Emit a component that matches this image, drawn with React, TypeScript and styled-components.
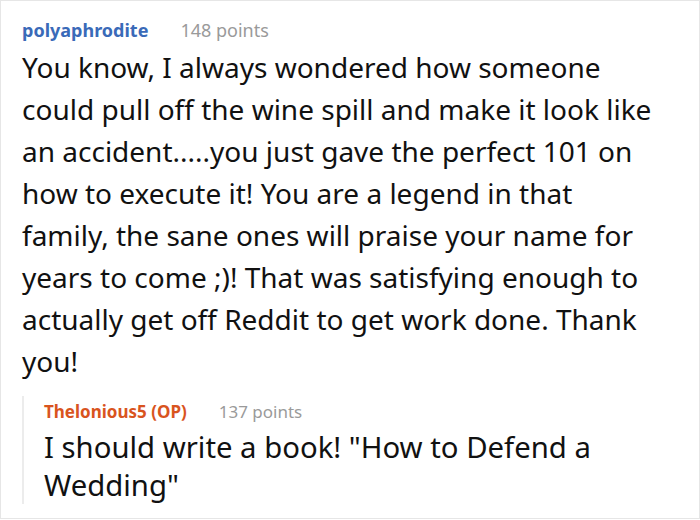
import React from 'react';
import styled, { createGlobalStyle } from 'styled-components';

const GlobalStyle = createGlobalStyle`
  html, body {
    margin: 0;
    padding: 0;
    background: #ffffff;
  }
  body {
    font-family: "Noto Sans", "Open Sans", sans-serif;
    color: #111111;
  }
`;

const Card = styled.div`
  box-sizing: border-box;
  width: 700px;
  height: 519px;
  border: 1px solid #e6e6e6;
  padding: 13px 42px 0 21px;
  overflow: hidden;
`;

const Header = styled.div<{ $reply?: boolean }>`
  display: flex;
  align-items: baseline;
  gap: 32px;
  font-size: ${(p) => (p.$reply ? '17px' : '18px')};
  line-height: 32px;
`;

const Author = styled.span<{ $op?: boolean }>`
  font-weight: 700;
  color: ${(p) => (p.$op ? '#d9541e' : '#3a6ab8')};
`;

const Points = styled.span`
  color: #9a9a9a;
`;

const Body = styled.p<{ $reply?: boolean }>`
  margin: 0;
  font-size: ${(p) => (p.$reply ? '29.3px' : '28px')};
  line-height: ${(p) => (p.$reply ? '38px' : '42px')};
  color: #111111;
`;

const Reply = styled.div`
  margin-top: 14px;
  border-left: 2px solid #ececec;
  padding-left: 20px;
`;

type CommentProps = {
  author: string;
  points: number;
  op?: boolean;
  reply?: boolean;
  children: React.ReactNode;
};

const Comment: React.FC<CommentProps> = ({ author, points, op, reply, children }) => (
  <div>
    <Header $reply={reply}>
      <Author $op={op}>{author}</Author>
      <Points>{points} points</Points>
    </Header>
    <Body $reply={reply}>{children}</Body>
  </div>
);

const App: React.FC = () => (
  <>
    <GlobalStyle />
    <Card>
      <Comment author="polyaphrodite" points={148}>
        You know, I always wondered how someone could pull off the wine spill and make it look like
        an accident.....you just gave the perfect 101 on how to execute it! You are a legend in that
        family, the sane ones will praise your name for years to come ;)! That was satisfying enough
        to actually get off Reddit to get work done. Thank you!
      </Comment>
      <Reply>
        <Comment author="Thelonious5 (OP)" points={137} op reply>
          I should write a book! "How to Defend a Wedding"
        </Comment>
      </Reply>
    </Card>
  </>
);

export default App;
